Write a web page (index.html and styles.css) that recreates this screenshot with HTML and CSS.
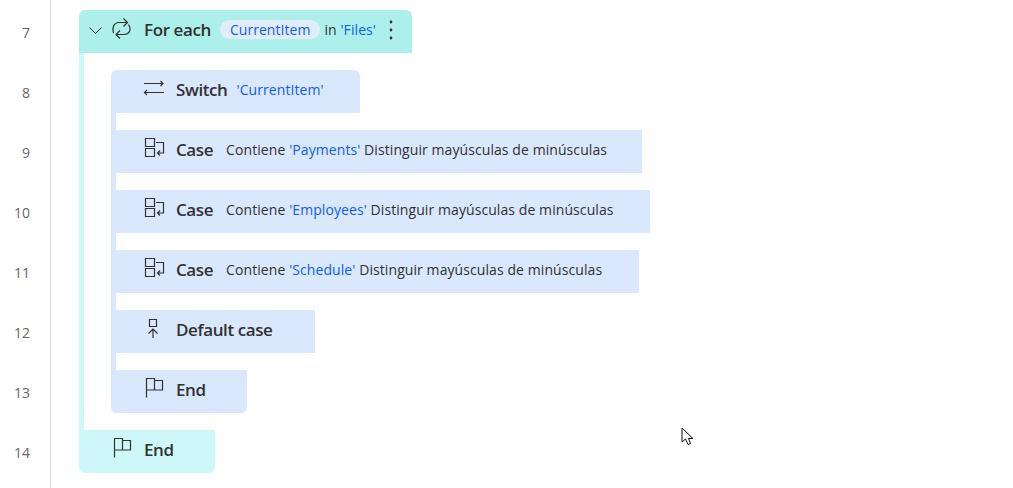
FILE: index.html
```html
<!DOCTYPE html>
<html lang="en">

<head>
    <meta charset="UTF-8">
    <meta name="viewport" content="width=device-width, initial-scale=1.0">
    <title>Flow editor</title>
    <link rel="stylesheet" href="styles.css">
</head>

<body>
    <svg class="defs" width="0" height="0">
        <symbol id="icon-switch" viewBox="0 0 22 24">
            <path d="M1 5.500H20M17.500 3L20 5.500L17.500 8M21 14.500H1.500M4 12L1.500 14.500L4 17" />
        </symbol>
        <symbol id="icon-case" viewBox="0 0 22 24">
            <path d="M2.500 .5H11.500V8.500H2.500ZM2.500 10.500H11.500V18.500H2.500ZM13 4.500H20.500V15H14.500M17 12.500L14.500 15L17 17.500" />
        </symbol>
        <symbol id="icon-default" viewBox="0 0 22 24">
            <path d="M6.500 1.500H13.500V8.500H6.500ZM10 20V11.500M5.500 15.500L10 11L14.500 15.500" />
        </symbol>
        <symbol id="icon-end" viewBox="0 0 22 24">
            <path d="M3.500 0V19.500M3.500 .5H11.500V12H3.500M11.500 2.500H19.500V12H11.500" />
        </symbol>
    </svg>

    <div class="editor">
        <div class="gutter">
            <div class="line-no">7</div>
            <div class="line-no">8</div>
            <div class="line-no">9</div>
            <div class="line-no">10</div>
            <div class="line-no">11</div>
            <div class="line-no">12</div>
            <div class="line-no">13</div>
            <div class="line-no">14</div>
        </div>

        <div class="flow">
            <div class="step step-loop step-top">
                <svg class="chevron" viewBox="0 0 14 24">
                    <path d="M1.500 9.500L7.500 15.500L13.500 9.500" />
                </svg>
                <svg class="icon" viewBox="0 0 22 24">
                    <path d="M2.500 15C.5 10 3 4.500 8 4.500H16M12.500 .5L16.500 4.500L12.500 8.500M17.500 6.500C21 12 18 16.500 13 16.500H5M9 12.500L5 16.500L9 20.500" />
                </svg>
                <span class="step-name">For each</span>
                <span class="pill">CurrentItem</span>
                <span class="detail">in <span class="val">'Files'</span></span>
                <svg class="kebab" viewBox="0 0 4 20">
                    <circle cx="2" cy="2" r="1.400" />
                    <circle cx="2" cy="10" r="1.400" />
                    <circle cx="2" cy="18" r="1.400" />
                </svg>
            </div>

            <div class="loop-body">
                <div class="step step-top step-switch">
                    <svg class="icon"><use href="#icon-switch" /></svg>
                    <span class="step-name">Switch</span>
                    <span class="detail val">'CurrentItem'</span>
                </div>

                <div class="switch-body">
                    <div class="step step-case-a">
                        <svg class="icon"><use href="#icon-case" /></svg>
                        <span class="step-name">Case</span>
                        <span class="detail">Contiene <span class="val">'Payments'</span> Distinguir mayúsculas de minúsculas</span>
                    </div>
                    <div class="step step-case-b">
                        <svg class="icon"><use href="#icon-case" /></svg>
                        <span class="step-name">Case</span>
                        <span class="detail">Contiene <span class="val">'Employees'</span> Distinguir mayúsculas de minúsculas</span>
                    </div>
                    <div class="step step-case-c">
                        <svg class="icon"><use href="#icon-case" /></svg>
                        <span class="step-name">Case</span>
                        <span class="detail">Contiene <span class="val">'Schedule'</span> Distinguir mayúsculas de minúsculas</span>
                    </div>
                    <div class="step step-default">
                        <svg class="icon"><use href="#icon-default" /></svg>
                        <span class="step-name">Default case</span>
                    </div>
                </div>

                <div class="step step-bottom step-end">
                    <svg class="icon"><use href="#icon-end" /></svg>
                    <span class="step-name">End</span>
                </div>
            </div>

            <div class="step step-bottom step-end step-loop-end">
                <svg class="icon"><use href="#icon-end" /></svg>
                <span class="step-name">End</span>
            </div>
        </div>
    </div>

    <svg class="cursor" width="14" height="19" viewBox="0 0 14 19">
        <path d="M1 1V15L4.500 12L7 17.500L9.500 16.500L7.500 11.500H12Z" />
    </svg>
</body>

</html>
```

FILE: styles.css
```css
body {
    margin: 0;
    height: 100vh;
    overflow: hidden;
    background-color: white;
    font-family: "Open Sans", "Noto Sans", sans-serif;
    color: #323130;
}

.defs {
    position: absolute;
}

.editor {
    display: flex;
    height: 100%;
}

.gutter {
    width: 50px;
    padding-top: 3px;
    border-right: 1px solid #dedede;
    flex-shrink: 0;
}

.line-no {
    height: 60px;
    line-height: 60px;
    padding-right: 20px;
    text-align: right;
    font-size: 14px;
    color: #6b6462;
}

.flow {
    padding: 10px 0 0 28px;
}

.step {
    display: flex;
    align-items: center;
    box-sizing: border-box;
    height: 43px;
    padding: 0 0 5px 27px;
    background-color: #dae8fe;
}

.step-top {
    border-radius: 6px 6px 0 0;
}

.step-bottom {
    border-radius: 0 0 6px 6px;
    padding-left: 32px;
}

.step-loop {
    width: 333px;
    padding-left: 9px;
    background-color: #adf0eb;
}

.step-switch {
    width: 249px;
    padding-left: 32px;
}

.step-case-a {
    width: 526px;
}

.step-case-b {
    width: 534px;
}

.step-case-c {
    width: 523px;
}

.step-default {
    width: 199px;
}

.step-end {
    width: 136px;
}

.step-loop-end {
    background-color: #cdf7f8;
}

.loop-body {
    display: flex;
    flex-direction: column;
    padding: 17px 0 17px 27px;
    border-left: 5px solid #cdf7f8;
}

.switch-body {
    display: flex;
    flex-direction: column;
    gap: 17px;
    padding: 17px 0;
    border-left: 5px solid #dae8fe;
}

.icon {
    width: 22px;
    height: 24px;
    margin: 2px 11px 0 0;
    flex-shrink: 0;
    fill: none;
    stroke: #323130;
    stroke-width: 1.2;
}

.chevron {
    width: 14px;
    height: 24px;
    margin: 2px 9px 0 0;
    fill: none;
    stroke: #323130;
    stroke-width: 1;
}

.step-name {
    font-size: 17px;
    font-weight: 600;
    letter-spacing: -0.4px;
    margin-right: 13px;
    white-space: nowrap;
}

.step-switch .step-name,
.step-loop .step-name {
    margin-right: 9px;
}

.detail {
    font-size: 14px;
    letter-spacing: 0.08px;
    white-space: nowrap;
}

.val {
    color: #0f5cf0;
}

.pill {
    padding: 1px 10px 0;
    margin-right: 4px;
    border-radius: 10px;
    background-color: #e2edfc;
    font-size: 14px;
    line-height: 18px;
    letter-spacing: 0.05px;
    color: #0f5cf0;
}

.kebab {
    width: 4px;
    height: 20px;
    margin: 2px 0 0 13px;
    fill: #323130;
}

.cursor {
    position: absolute;
    left: 681px;
    top: 427px;
    fill: white;
    stroke: #111;
    stroke-width: 1;
}
```
